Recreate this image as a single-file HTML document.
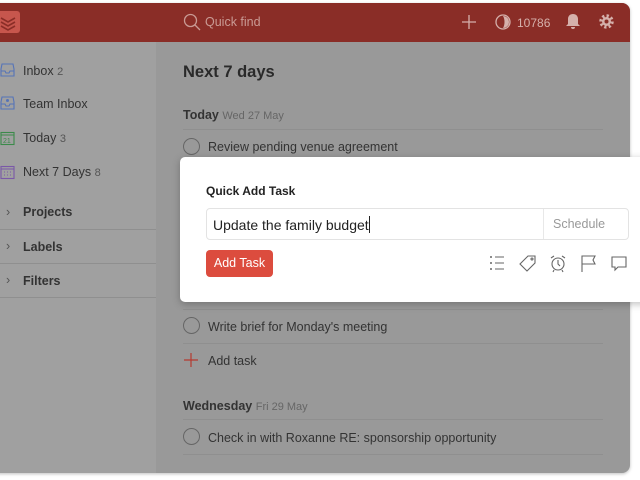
<!DOCTYPE html>
<html><head><meta charset="utf-8"><style>
*{box-sizing:border-box;margin:0;padding:0}
body{width:640px;height:480px;background:#fff;font-family:"Liberation Sans",sans-serif;position:relative;overflow:hidden}
.app{position:absolute;left:-10px;top:3px;width:640px;height:470px;border-radius:8px;background:#999;overflow:hidden;box-shadow:0 1px 3px rgba(0,0,0,.25)}
.hdr{position:absolute;left:0;top:0;width:100%;height:39px;background:#8a2d27}
.side{position:absolute;left:10px;top:39px;width:146px;height:440px;background:#a0a0a0}
.t{position:absolute;color:#333;font-size:12.5px;white-space:nowrap}
.c{color:#555;font-size:11px}
.sep{position:absolute;height:1px;background:#8f8f8f}
.circ{position:absolute;width:17px;height:17px;border:1px solid #666;border-radius:50%}
.modal{position:absolute;left:180px;top:157px;width:470px;height:145px;background:#fff;border-radius:5px;box-shadow:0 2px 8px rgba(0,0,0,.25)}
</style></head><body>
<div class="app">
<div class="hdr"></div>
<div class="side" style="width:156px"></div>
</div>
<div style="position:absolute;left:0;top:11px;width:20px;height:22px;background:#c7564d;border-radius:0 3px 3px 0"></div>
<svg style="position:absolute;left:0;top:13px" width="18" height="18"><path d="M1 5l7 4 7-4M1 9l7 4 7-4M1 13l7 4 7-4" stroke="#8a2d27" stroke-width="1.6" fill="none"/></svg>
<svg style="position:absolute;left:183px;top:13px" width="18" height="18"><circle cx="7.5" cy="7.5" r="6" stroke="#c99a94" stroke-width="1.3" fill="none"/><path d="M12 12l5 5" stroke="#c99a94" stroke-width="1.3"/></svg>
<div class="t" style="left:205px;top:15px;color:#c99a94;font-size:12.5px">Quick find</div>
<svg style="position:absolute;left:461px;top:14px" width="16" height="16"><path d="M8 1v14M1 8h14" stroke="#d5b0ab" stroke-width="1.3"/></svg>
<svg style="position:absolute;left:495px;top:14px" width="16" height="16"><circle cx="8" cy="8" r="7" stroke="#d5b0ab" stroke-width="1.3" fill="none"/><path d="M8 2a6 6 0 0 1 0 12c2-3 2-9 0-12z" fill="#d5b0ab"/></svg>
<div class="t" style="left:517px;top:16px;color:#d5b0ab;font-size:12px">10786</div>
<svg style="position:absolute;left:565px;top:13px" width="16" height="17"><path d="M8 1c-3 0-5 2-5 5v5l-2 2h14l-2-2V6c0-3-2-5-5-5zM6 14a2 2 0 0 0 4 0z" fill="#d5b0ab"/></svg>
<svg style="position:absolute;left:598px;top:13px" width="17" height="17" viewBox="0 0 17 17"><circle cx="8.5" cy="8.5" r="5.5" fill="none" stroke="#d5b0ab" stroke-width="3.5" stroke-dasharray="2.2 2.1"/><circle cx="8.5" cy="8.5" r="4.5" fill="#d5b0ab"/><circle cx="8.5" cy="8.5" r="2" fill="#8a2d27"/></svg>
<svg style="position:absolute;left:0;top:63px" width="15" height="15"><path d="M2 1h11l1 5v7H1V6z M1 8h4l1 2h3l1-2h4" stroke="#5573b8" stroke-width="1.1" fill="none"/></svg>
<div class="t" style="left:23px;top:64px">Inbox <span class="c">2</span></div>
<svg style="position:absolute;left:0;top:96px" width="15" height="15"><path d="M2 1h11l1 5v7H1V6z M1 8h4l1 2h3l1-2h4" stroke="#5573b8" stroke-width="1.1" fill="none"/><circle cx="7.5" cy="4.5" r="1.5" fill="#5573b8"/></svg>
<div class="t" style="left:23px;top:97px">Team Inbox</div>
<svg style="position:absolute;left:0;top:131px" width="15" height="15"><rect x="1" y="1.5" width="13" height="12" stroke="#3b8a4a" stroke-width="1.1" fill="none"/><path d="M1 4h13" stroke="#3b8a4a"/><text x="3" y="12" font-size="7" fill="#3b8a4a" font-family="Liberation Sans">21</text></svg>
<div class="t" style="left:23px;top:131px">Today <span class="c">3</span></div>
<svg style="position:absolute;left:0;top:165px" width="15" height="15"><rect x="1" y="1.5" width="13" height="12" stroke="#7a58a8" stroke-width="1.1" fill="none"/><path d="M1 4h13" stroke="#7a58a8"/><path d="M4 7h1M7 7h1M10 7h1M4 10h1M7 10h1M10 10h1" stroke="#7a58a8"/></svg>
<div class="t" style="left:23px;top:165px">Next 7 Days <span class="c">8</span></div>
<div class="sep" style="left:0;top:229px;width:156px"></div>
<div class="sep" style="left:0;top:263px;width:156px"></div>
<div class="sep" style="left:0;top:297px;width:156px"></div>
<div class="t" style="left:6px;top:205px;color:#555">›</div>
<div class="t" style="left:23px;top:205px;font-weight:bold">Projects</div>
<div class="t" style="left:6px;top:239px;color:#555">›</div>
<div class="t" style="left:23px;top:240px;font-weight:bold">Labels</div>
<div class="t" style="left:6px;top:273px;color:#555">›</div>
<div class="t" style="left:23px;top:274px;font-weight:bold">Filters</div>
<div class="t" style="left:183px;top:63px;font-size:16.5px;font-weight:bold;color:#2a2a2a">Next 7 days</div>
<div class="t" style="left:183px;top:108px;font-weight:bold">Today <span class="c" style="font-weight:normal;color:#666">Wed 27 May</span></div>
<div class="sep" style="left:183px;top:129px;width:420px"></div>
<div class="circ" style="left:183px;top:138px"></div>
<div class="t" style="left:208px;top:140px">Review pending venue agreement</div>
<div class="sep" style="left:183px;top:309px;width:420px"></div>
<div class="circ" style="left:183px;top:317px"></div>
<div class="t" style="left:208px;top:320px">Write brief for Monday's meeting</div>
<div class="sep" style="left:183px;top:343px;width:420px"></div>
<svg style="position:absolute;left:184px;top:353px" width="14" height="14"><path d="M7 0v14M0 7h14" stroke="#b53a30" stroke-width="1.2"/></svg>
<div class="t" style="left:208px;top:354px">Add task</div>
<div class="t" style="left:183px;top:399px;font-weight:bold">Wednesday <span class="c" style="font-weight:normal;color:#666">Fri 29 May</span></div>
<div class="sep" style="left:183px;top:419px;width:420px"></div>
<div class="circ" style="left:183px;top:428px"></div>
<div class="t" style="left:208px;top:431px">Check in with Roxanne RE: sponsorship opportunity</div>
<div class="sep" style="left:183px;top:454px;width:420px"></div>
<div class="modal"></div>
<div class="t" style="left:206px;top:184px;font-weight:bold;font-size:12px;color:#222">Quick Add Task</div>
<div style="position:absolute;left:206px;top:208px;width:423px;height:32px;border:1px solid #e3e3e3;border-radius:4px"></div>
<div style="position:absolute;left:543px;top:209px;width:1px;height:30px;background:#e8e8e8"></div>
<div class="t" style="left:213px;top:216px;font-size:14px;color:#222">Update the family budget<span style="display:inline-block;width:1px;height:17px;background:#222;vertical-align:-3px"></span></div>
<div class="t" style="left:553px;top:217px;font-size:12.5px;color:#999">Schedule</div>
<div style="position:absolute;left:206px;top:250px;width:67px;height:27px;background:#dc4c3e;border-radius:4px;color:#fff;font-size:12.5px;text-align:center;line-height:27px">Add Task</div>
<svg style="position:absolute;left:488px;top:254px;overflow:visible" width="145" height="20" fill="none" stroke="#666" stroke-width="1.1">
<path d="M3 3v0M3 9v0M3 15v0" stroke-width="2" stroke-linecap="round"/><path d="M7 3h9M7 9h9M7 15h9"/>
<path d="M32 10l8-8h7v7l-8 8z"/><circle cx="44" cy="5" r="1"/>
<circle cx="70" cy="10" r="6"/><path d="M70 6v4l2 2M63 4l3-2M77 4l-3-2M66 16l-1 2M74 16l1 2"/>
<path d="M94 18V2h13l-2 4 2 4H94"/>
<path d="M124 3h14v10h-8l-3 3v-3h-3z"/>
</svg>
</body></html>
